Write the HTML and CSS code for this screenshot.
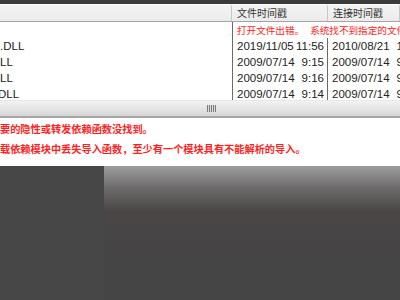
FILE: index.html
```html
<!DOCTYPE html>
<html lang="zh-CN">
<head>
  <meta charset="UTF-8" />
  <title>依赖项检查</title>
  <link rel="stylesheet" href="styles.css">
</head>
<body>

  <div class="topbar"></div>

  <div class="list">
    <div class="list-head">
      <div class="head-cell"></div>
      <div class="head-cell">文件时间戳</div>
      <div class="head-cell">连接时间戳</div>
    </div>

    <div class="rows">
      <div class="row">
        <div class="cell name"></div>
        <div class="cell error">打开文件出错。<span class="gap"></span>系统找不到指定的文件。</div>
      </div>
      <div class="row">
        <div class="cell name">.DLL</div>
        <div class="cell stamp"><span>2019/11/05</span><span>11:56</span></div>
        <div class="cell stamp"><span>2010/08/21</span><span>11:56</span></div>
      </div>
      <div class="row">
        <div class="cell name">LL</div>
        <div class="cell stamp"><span>2009/07/14</span><span>9:15</span></div>
        <div class="cell stamp"><span>2009/07/14</span><span>9:15</span></div>
      </div>
      <div class="row">
        <div class="cell name">LL</div>
        <div class="cell stamp"><span>2009/07/14</span><span>9:16</span></div>
        <div class="cell stamp"><span>2009/07/14</span><span>9:16</span></div>
      </div>
      <div class="row">
        <div class="cell name cut">DLL</div>
        <div class="cell stamp"><span>2009/07/14</span><span>9:14</span></div>
        <div class="cell stamp"><span>2009/07/14</span><span>9:14</span></div>
      </div>
    </div>

    <div class="hscroll">
      <div class="grip"></div>
    </div>
  </div>

  <div class="log">
    <p>要的隐性或转发依赖函数没找到。</p>
    <p>载依赖模块中丢失导入函数，至少有一个模块具有不能解析的导入。</p>
  </div>

  <div class="desktop">
    <div class="pane-left"></div>
    <div class="pane-right"></div>
  </div>

</body>
</html>
```

FILE: styles.css
```css
body { margin: 0; width: 400px; height: 300px; overflow: hidden; background: #464646; font-family: "Liberation Sans", "Noto Sans CJK SC", sans-serif; font-size: 11.5px; color: #222; }

.topbar { height: 4px; background: #3b3b3b; border-bottom: 1px solid #fbfbfb; }

.list { background: #fff; }
.list-head { display: grid; grid-template-columns: 232px 96px 1fr; height: 16px; background: linear-gradient(#f3f3f3, #ebebeb); border-bottom: 1px solid #a3a3a3; font-family: "Noto Sans CJK SC", sans-serif; font-size: 10px; line-height: 16px; color: #333; }
.head-cell { padding-left: 5px; border-right: 1px solid #c9c9c9; white-space: nowrap; overflow: hidden; }

.rows { height: 78px; overflow: hidden; }
.row { display: grid; grid-template-columns: 232px 96px 1fr; height: 16px; line-height: 16px; }
.cell { white-space: nowrap; overflow: hidden; }
.name { padding-left: 0; }
.name.cut { text-indent: -2px; }
.error { grid-column: 2 / -1; border-left: 1px solid #6a6a6a; padding-left: 4px; color: #ff1a1a; font-family: "Noto Sans CJK SC", sans-serif; font-size: 9.6px; }
.error .gap { display: inline-block; width: 6px; }
.stamp { display: flex; justify-content: space-between; padding: 0 3px 0 4px; }
.stamp:nth-child(2) { border-left: 1px solid #6a6a6a; border-right: 1px solid #6a6a6a; }
.stamp:nth-child(3) { padding-right: 0; gap: 7px; justify-content: flex-start; }

.hscroll { height: 15px; background: linear-gradient(#f2f2f2, #e2e2e2 60%, #d6d6d6); border-top: 1px solid #e8e8e8; border-bottom: 2px solid #a5a5a5; display: flex; justify-content: center; align-items: center; padding-left: 22px; }
.grip { width: 9px; height: 7px; background: repeating-linear-gradient(90deg, #7c7c7c 0 1px, #dcdcdc 1px 2px); }

.log { height: 47px; background: #fff; padding-top: 1px; font-family: "Noto Sans CJK SC", sans-serif; font-size: 10.2px; font-weight: bold; color: #ff1f1f; line-height: 20px; }
.log p { margin: 0; white-space: nowrap; }

.desktop { display: grid; grid-template-columns: 104px 1fr; height: 140px; }
.pane-left { background: #474747; margin-top: 1px; }
.pane-right { background: linear-gradient(#9d9d9d, #6e6b6b 22px, #4a4646 45px, #464444 80px, #454545); }
```
